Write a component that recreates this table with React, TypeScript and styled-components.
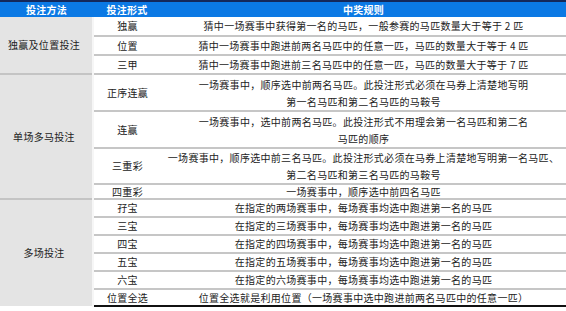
import React from "react";
import styled, { createGlobalStyle } from "styled-components";

////////////////////////////////////////////////////////////////////// Global

const GlobalStyle = createGlobalStyle`
  html, body {
    margin: 0;
    padding: 0;
    background: #ffffff;
  }
  body {
    font-family: "Noto Sans CJK SC", "Noto Sans", sans-serif;
  }
`;

////////////////////////////////////////////////////////////////////// Types

type Bet = {
  form: string;
  rule: string[];
  height: number;
};

type Group = {
  method: string;
  bets: Bet[];
};

////////////////////////////////////////////////////////////////////// Data

const groups: Group[] = [
  {
    method: "独赢及位置投注",
    bets: [
      { form: "独赢", rule: ["猜中一场赛事中获得第一名的马匹，一般参赛的马匹数量大于等于 2 匹"], height: 19 },
      { form: "位置", rule: ["猜中一场赛事中跑进前两名马匹中的任意一匹，马匹的数量大于等于 4 匹"], height: 19 },
      { form: "三甲", rule: ["猜中一场赛事中跑进前三名马匹中的任意一匹，马匹的数量大于等于 7 匹"], height: 19 },
    ],
  },
  {
    method: "单场多马投注",
    bets: [
      {
        form: "正序连赢",
        rule: ["一场赛事中，顺序选中前两名马匹。此投注形式必须在马券上清楚地写明", "第一名马匹和第二名马匹的马鞍号"],
        height: 37,
      },
      {
        form: "连赢",
        rule: ["一场赛事中，选中前两名马匹。此投注形式不用理会第一名马匹和第二名", "马匹的顺序"],
        height: 37,
      },
      {
        form: "三重彩",
        rule: ["一场赛事中，顺序选中前三名马匹。此投注形式必须在马券上清楚地写明第一名马匹、", "第二名马匹和第三名马匹的马鞍号"],
        height: 36,
      },
      { form: "四重彩", rule: ["一场赛事中，顺序选中前四名马匹"], height: 15 },
    ],
  },
  {
    method: "多场投注",
    bets: [
      { form: "孖宝", rule: ["在指定的两场赛事中，每场赛事均选中跑进第一名的马匹"], height: 18 },
      { form: "三宝", rule: ["在指定的三场赛事中，每场赛事均选中跑进第一名的马匹"], height: 18 },
      { form: "四宝", rule: ["在指定的四场赛事中，每场赛事均选中跑进第一名的马匹"], height: 18 },
      { form: "五宝", rule: ["在指定的五场赛事中，每场赛事均选中跑进第一名的马匹"], height: 18 },
      { form: "六宝", rule: ["在指定的六场赛事中，每场赛事均选中跑进第一名的马匹"], height: 18 },
      { form: "位置全选", rule: ["位置全选就是利用位置（一场赛事中选中跑进前两名马匹中的任意一匹）"], height: 17 },
    ],
  },
];

////////////////////////////////////////////////////////////////////// Styles

const Table = styled.table`
  width: 566px;
  border-collapse: collapse;
  table-layout: fixed;
  border-top: 2px solid #14285a;
  font-size: 10px;
  letter-spacing: 0.3px;
  line-height: 12px;
  color: #222222;
`;

const HeadCell = styled.th`
  height: 15px;
  padding: 0;
  background: #0b79e4;
  color: #ffffff;
  font-weight: 700;
  text-align: center;
  line-height: 12px;
`;

const Row = styled.tr<{ $h: number }>`
  height: ${(p) => p.$h}px;
`;

const MethodCell = styled.td`
  background: #e4e4e4;
  text-align: center;
  vertical-align: middle;
  padding: 0 4px 0 0;
  border-top: 2px solid #c4c4c4;
  border-right: 2px solid #f6f6f6;

  tr:first-child > & {
    border-top: none;
  }
`;

const FormCell = styled.td<{ $last: boolean }>`
  text-align: center;
  vertical-align: middle;
  padding: 0;
  border-top: 2px solid #c6c6c6;
  border-bottom: ${(p) => (p.$last ? "2px solid #111111" : "none")};
  white-space: nowrap;
  overflow: hidden;

  tbody > tr:first-child > & {
    border-top: none;
  }
`;

const RuleCell = styled(FormCell)<{ $multi: boolean }>`
  line-height: ${(p) => (p.$multi ? "17px" : "12px")};
`;

////////////////////////////////////////////////////////////////////// App

export default function App() {
  return (
    <>
      <GlobalStyle />
      <Table>
        <colgroup>
          <col style={{ width: 93 }} />
          <col style={{ width: 68 }} />
          <col />
        </colgroup>
        <thead>
          <tr>
            <HeadCell>投注方法</HeadCell>
            <HeadCell>投注形式</HeadCell>
            <HeadCell>中奖规则</HeadCell>
          </tr>
        </thead>
        <tbody>
          {groups.map((g, gi) =>
            g.bets.map((b, i) => {
              const last = gi === groups.length - 1 && i === g.bets.length - 1;
              return (
                <Row key={g.method + b.form} $h={b.height}>
                  {i === 0 && <MethodCell rowSpan={g.bets.length}>{g.method}</MethodCell>}
                  <FormCell $last={last}>{b.form}</FormCell>
                  <RuleCell $last={last} $multi={b.rule.length > 1}>
                    {b.rule.map((line, j) => (
                      <React.Fragment key={j}>
                        {j > 0 && <br />}
                        {line}
                      </React.Fragment>
                    ))}
                  </RuleCell>
                </Row>
              );
            })
          )}
        </tbody>
      </Table>
    </>
  );
}
